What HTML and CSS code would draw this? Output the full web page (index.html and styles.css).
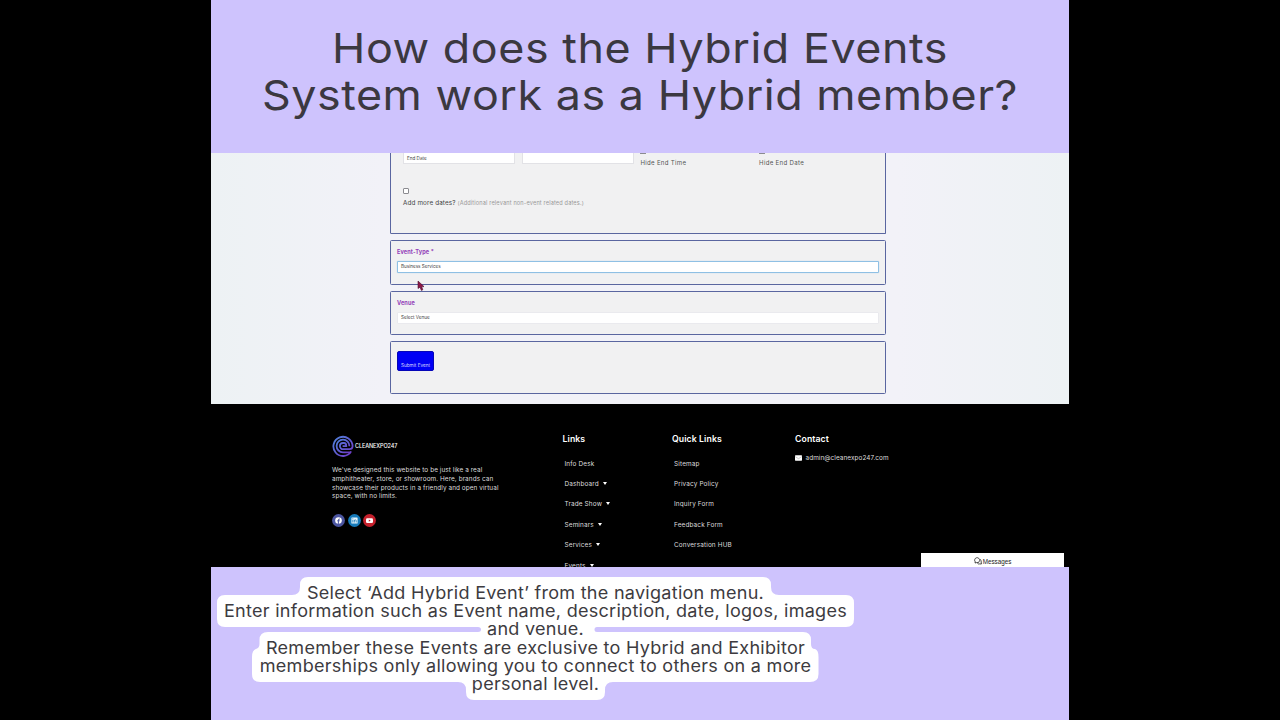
FILE: index.html
```html
<!DOCTYPE html>
<html lang="en">

<head>
    <meta charset="UTF-8">
    <meta name="viewport" content="width=device-width, initial-scale=1.0">
    <title>Hybrid Events System</title>
    <link rel="stylesheet" href="styles.css">
</head>

<body>
    <div class="slide">
        <header class="title">
            <h1>How does the Hybrid Events<br>System work as a Hybrid member?</h1>
        </header>

        <div class="screen">
            <main class="form-area">
                <section class="card dates">
                    <div class="date-row">
                        <div class="input">End Date</div>
                        <div class="input"></div>
                        <div class="hide-option"><i class="check"></i><span>Hide End Time</span></div>
                        <div class="hide-option"><i class="check"></i><span>Hide End Date</span></div>
                    </div>
                    <i class="check more-check"></i>
                    <p class="more"><span>Add more dates?</span> <small>(Additional relevant non-event related dates.)</small></p>
                </section>

                <section class="card">
                    <label>Event-Type *</label>
                    <div class="select active">Business Services</div>
                </section>

                <section class="card">
                    <label>Venue</label>
                    <div class="select">Select Venue</div>
                </section>

                <section class="card submit-card">
                    <button>Submit Event</button>
                </section>

                <svg class="cursor" width="8" height="12" viewBox="0 0 8 12">
                    <path d="M1 1 L1 8.5 L3 7.2 L4.4 10.5 L5.8 9.8 L4.7 6.8 L7 6.6 Z" fill="#8d1748" stroke="#4a1030" stroke-width=".6" />
                </svg>
            </main>

            <footer class="footer">
                <div class="about">
                    <div class="logo">
                        <svg width="22" height="22" viewBox="0 0 22 22" fill="none" stroke="url(#g)" stroke-width="1.8">
                            <defs>
                                <linearGradient id="g" x1="0" y1="0" x2="1" y2="1">
                                    <stop offset="0" stop-color="#4f83dc" />
                                    <stop offset="1" stop-color="#7138c8" />
                                </linearGradient>
                            </defs>
                            <path d="M19.2 16.4 A9.6 9.6 0 1 1 20.6 11.2 Q20.4 14.2 17.5 14.2 H11 A3.1 3.1 0 0 1 11 8 H12 Q14.300 8 14.300 11.200 H10.600" />
                            <path d="M17.4 11.2 A6.4 6.4 0 1 0 11 17.4 H18.500" />
                        </svg>
                        <span>CLEANEXPO247</span>
                    </div>
                    <p>We've designed this website to be just like a real<br>amphitheater, store, or showroom. Here, brands can<br>showcase their products in a friendly and open virtual<br>space, with no limits.</p>
                    <div class="social">
                        <svg width="13" height="13" viewBox="0 0 13 13">
                            <circle cx="6.5" cy="6.5" r="6.4" fill="#4b55a0" />
                            <circle cx="6.5" cy="6.5" r="3.3" fill="#fff" />
                            <path d="M6.4 9.9 V6 Q6.4 4.9 7.8 5 M5.3 6.8 H7.7" stroke="#4b55a0" stroke-width="1" fill="none" />
                        </svg>
                        <svg width="13" height="13" viewBox="0 0 13 13">
                            <circle cx="6.5" cy="6.5" r="6.4" fill="#1579b8" />
                            <rect x="3.4" y="3.5" width="6.2" height="6" rx=".6" fill="#e8f5fc" />
                            <path d="M4.8 5.7 V8.5 M4.8 4.4 V5 M6.3 8.5 V5.7 M6.3 6.8 Q7.3 5.2 8.2 6.4 V8.5" stroke="#1579b8" stroke-width=".8" fill="none" />
                        </svg>
                        <svg width="13" height="13" viewBox="0 0 13 13">
                            <circle cx="6.5" cy="6.5" r="6.4" fill="#c4202c" />
                            <rect x="3" y="4.2" width="7" height="4.8" rx="1.3" fill="#fff" />
                            <path d="M5.8 5.5 V7.7 L7.7 6.6 Z" fill="#c4202c" />
                        </svg>
                    </div>
                </div>

                <nav class="links">
                    <h4>Links</h4>
                    <ul>
                        <li>Info Desk</li>
                        <li class="drop">Dashboard</li>
                        <li class="drop">Trade Show</li>
                        <li class="drop">Seminars</li>
                        <li class="drop">Services</li>
                        <li class="drop">Events</li>
                    </ul>
                </nav>

                <nav class="quick">
                    <h4>Quick Links</h4>
                    <ul>
                        <li>Sitemap</li>
                        <li>Privacy Policy</li>
                        <li>Inquiry Form</li>
                        <li>Feedback Form</li>
                        <li>Conversation HUB</li>
                    </ul>
                </nav>

                <div class="contact">
                    <h4>Contact</h4>
                    <div class="mail">
                        <svg width="7" height="6" viewBox="0 0 7 6">
                            <rect width="7" height="5.4" y=".3" rx=".6" fill="#fff" />
                            <path d="M.2 1.6 L3.5 3.7 L6.8 1.6" stroke="#777" stroke-width=".4" fill="none" />
                        </svg>
                        <span>admin@cleanexpo247.com</span>
                    </div>
                </div>

                <div class="messages">
                    <svg width="8" height="8" viewBox="0 0 8 8" fill="none" stroke="#222" stroke-width=".8">
                        <path d="M2.4 5.6 L1 6 L1.3 4.9 A2.5 2.5 0 1 1 5.6 3.6 A2.5 2.5 0 0 1 2.4 5.6" />
                        <path d="M6 2.3 Q7.5 3 7.2 5 L7.4 7 L5.6 6.9 Q4.2 7.3 3.4 6.2" />
                    </svg>
                    <span>Messages</span>
                </div>
            </footer>
        </div>

        <div class="caption">
            <svg class="bubble" width="637" height="124" viewBox="0 0 637 124">
                <path fill="#fff" d="M91 0 H546 Q554 0 554 8 V10 Q554 18 562 18 H629 Q637 18 637 26 V42 Q637 50 629 50 H380 Q377.5 50 377.5 52.5 Q377.5 55 380 55 H586 Q594 55 594 63 V67 Q594 72 598 72 Q601.5 73 601.5 80 V97 Q601.5 105 593 105 H396 Q388 105 388 113 V115 Q388 123 380 123 H257 Q249 123 249 115 V113 Q249 105 241 105 H43 Q35 105 35 97 V80 Q35 73 39 72 Q42.5 71 42.5 67 V63 Q42.5 55 51 55 H261 Q264 55 264 52.5 Q264 50 261 50 H8 Q0 50 0 42 V26 Q0 18 8 18 H75 Q83 18 83 10 V8 Q83 0 91 0 Z" />
            </svg>
            <p>Select ‘Add Hybrid Event’ from the navigation menu.</p>
            <p>Enter information such as Event name, description, date, logos, images</p>
            <p>and venue.</p>
            <p>Remember these Events are exclusive to Hybrid and Exhibitor</p>
            <p>memberships only allowing you to connect to others on a more</p>
            <p>personal level.</p>
        </div>
    </div>
</body>

</html>
```
FILE: styles.css
```css
* {
    box-sizing: border-box;
    margin: 0;
    padding: 0;
}

body {
    height: 720px;
    overflow: hidden;
    background: #000;
    font-family: Inter, "Liberation Sans", sans-serif;
}

.slide {
    width: 858px;
    height: 720px;
    margin: 0 auto;
    display: flex;
    flex-direction: column;
    background: #cec3fd;
}

.title {
    height: 153px;
    padding-top: 25px;
    text-align: center;
    white-space: nowrap;
}

.title h1 {
    font-size: 41.5px;
    line-height: 46.5px;
    font-weight: 400;
    letter-spacing: .5px;
    color: #3b3840;
    transform: scaleX(1.08);
}

.screen {
    height: 414px;
    overflow: hidden;
}

/* form */
.form-area {
    position: relative;
    height: 251px;
    padding-left: 179px;
    display: flex;
    flex-direction: column;
    gap: 6px;
    background: linear-gradient(to right, #edf2f4, #f2f2f8 20%, #f2f2f8 80%, #edf2f4);
}

.card {
    width: 496px;
    height: 44.7px;
    padding: 7px 6px;
    border: 1.4px solid #5a66a0;
    border-radius: 1.5px;
    background: #f1f1f2;
    flex: none;
}

.card.dates {
    height: 81px;
    padding: 0 12px;
    border-top: none;
    border-radius: 0 0 1.5px 1.5px;
}

.date-row {
    display: grid;
    grid-template-columns: 112px 112px 112px 112px;
    gap: 6.7px;
    height: 35px;
}

.input,
.select {
    height: 11px;
    padding-left: 3px;
    border: 1px solid #e2e2e6;
    border-top: none;
    background: #fff;
    font-size: 4.6px;
    line-height: 10px;
    color: #444;
}

.input {
    line-height: 12px;
}

.hide-option {
    font-size: 6.1px;
    line-height: 8px;
    color: #555;
    letter-spacing: .3px;
}

.hide-option .check {
    height: 1px;
    border-top: none;
    margin-bottom: 5px;
}

.check {
    display: block;
    width: 5.5px;
    height: 5.5px;
    border: 1px solid #8b8b90;
    border-radius: 1px;
    background: #fff;
}

.more {
    margin-top: 5.5px;
    font-size: 6.3px;
    line-height: 9px;
    color: #444;
    white-space: nowrap;
}

.more span {
    letter-spacing: .15px;
}

.more small {
    font-size: 5.6px;
    color: #999;
    letter-spacing: .15px;
}

label {
    display: block;
    font-size: 5.6px;
    line-height: 8px;
    font-weight: 700;
    color: #9340b8;
    letter-spacing: .1px;
}

.select {
    width: 482px;
    height: 12px;
    margin-top: 5px;
    border: 1px solid #eaeaee;
    border-radius: 1px;
}

.select.active {
    border-color: #8fc0e4;
    box-shadow: 0 0 1px #8fc0e4;
}

.card.submit-card {
    height: 52.5px;
    padding-top: 9px;
}

button {
    display: block;
    width: 37px;
    height: 20px;
    padding-top: 7px;
    border: 1px solid #0606b8;
    border-radius: 2px;
    background: #0000f5;
    color: #d8d8ff;
    font: 4.7px Inter, sans-serif;
    white-space: nowrap;
}

.cursor {
    position: absolute;
    left: 206px;
    top: 127px;
}

/* footer */
.footer {
    position: relative;
    height: 163px;
    padding: 31px 0 0 121px;
    display: flex;
    background: #000;
    color: #ddd;
}

.about {
    width: 230.5px;
}

.logo {
    display: flex;
    align-items: center;
    gap: 1px;
    height: 22px;
    color: #fff;
    font-size: 5.5px;
    font-weight: 500;
    letter-spacing: -.1px;
}

.about p {
    margin-top: 9px;
    font-size: 6.4px;
    line-height: 8.8px;
    letter-spacing: .08px;
    white-space: nowrap;
}

.social {
    display: flex;
    gap: 2.5px;
    margin-top: 13px;
}

h4 {
    font-size: 8.7px;
    line-height: 9px;
    font-weight: 600;
    letter-spacing: .1px;
    color: #fff;
}

.links {
    width: 109.5px;
}

.quick {
    width: 123px;
}

ul {
    list-style: none;
    margin-top: 9.5px;
    padding-left: 2px;
}

li {
    font-size: 6.4px;
    line-height: 20.4px;
    letter-spacing: .15px;
}

.drop::after {
    content: "";
    display: inline-block;
    margin-left: 4px;
    vertical-align: 1px;
    border: 2.5px solid transparent;
    border-top: 3px solid #fff;
    border-bottom: none;
}

.mail {
    display: flex;
    align-items: center;
    gap: 3.5px;
    margin-top: 10px;
    font-size: 6.4px;
    line-height: 8px;
    letter-spacing: .08px;
}

.messages {
    position: absolute;
    right: 5px;
    bottom: 0;
    width: 143px;
    height: 14px;
    display: flex;
    align-items: center;
    justify-content: center;
    gap: 1px;
    padding-top: 2px;
    background: #fff;
    color: #222;
    font: 500 6.3px "Liberation Sans", sans-serif;
}

/* caption */
.caption {
    position: relative;
    isolation: isolate;
    width: 637px;
    margin-left: 5.5px;
    padding-top: 17px;
    text-align: center;
    white-space: nowrap;
    font-size: 17.2px;
    line-height: 18.2px;
    color: #3d3b40;
}

.bubble {
    position: absolute;
    left: 0;
    top: 10px;
    z-index: -1;
}

.caption p {
    letter-spacing: .25px;
    transform: scaleX(1.05);
}
```
